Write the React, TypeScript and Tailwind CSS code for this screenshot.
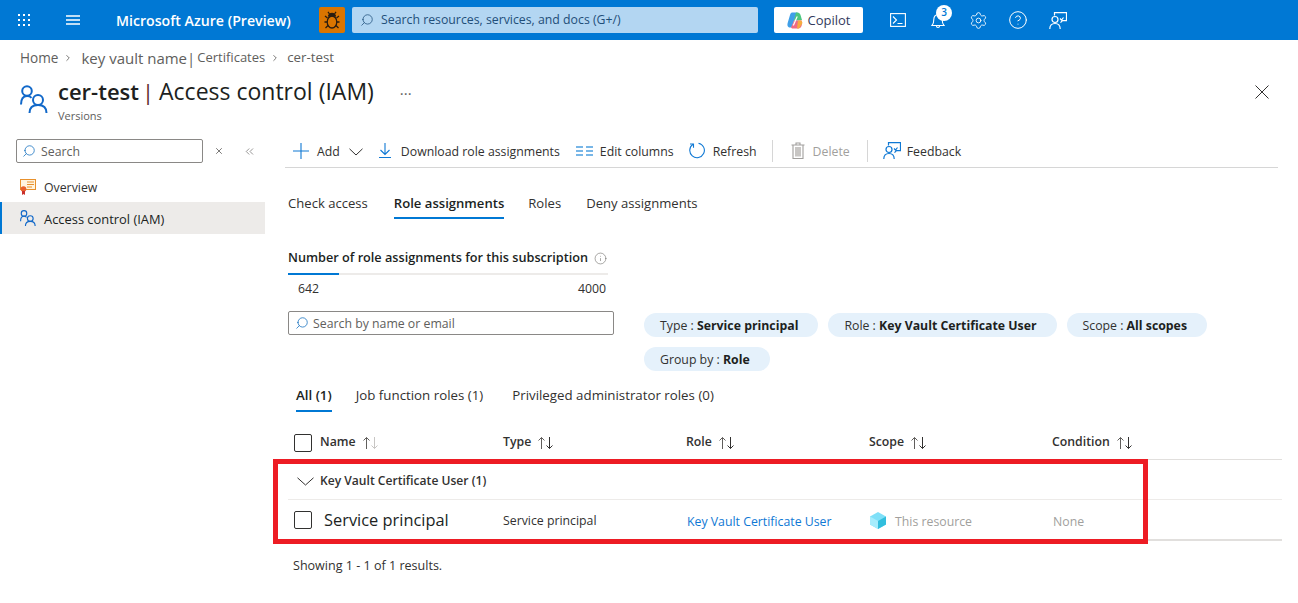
import { ChevronRight, ChevronsLeft, CircleHelp, Info, Search, Settings, X } from 'lucide-react'

const waffle = [3, 8, 13]

function Waffle() {
    return (
        <svg width="16" height="16" viewBox="0 0 16 16" fill="#fff">
            {waffle.map((y) => waffle.map((x) => <rect key={`${x}-${y}`} x={x - 1} y={y - 1} width="2" height="2" />))}
        </svg>
    )
}

function Bug() {
    return (
        <svg width="16" height="18" viewBox="0 0 16 18" fill="none" stroke="#2b1d10" strokeWidth="1.300">
            <ellipse cx="8" cy="11" rx="4.800" ry="6" />
            <path d="M4.500 5.500C5 3 6 2.500 8 2.500s3 .5 3.500 3" fill="#2b1d10" />
            <path d="M5.500 3L4 .8M10.500 3L12 .8M1 5l2.500 2M15 5l-2.500 2M.5 11h2.700M15.500 11h-2.700M1.500 17l2.500-2.500M14.500 17L12 14.500" />
        </svg>
    )
}

function CopilotLogo() {
    return (
        <svg width="16" height="17" viewBox="0 0 16 17">
            <path d="M5 .5h5.500L7 9l-2.500 6.500H3C.5 15.500 0 13 .8 10.500L3 3C3.500 1.500 4 .5 5 .5z" fill="#3f9fe8" />
            <path d="M9 .5h1.500c1.500 0 2.500 1 3 2.500l1.500 5-4 .5H7z" fill="#4dc67f" />
            <path d="M4 15.500L7 8.500h7.500c1 3 .5 8-3.500 8H5z" fill="#ee6a86" />
            <path d="M11 8.500h3.500l1 2.500-3.500 5.500h-2z" fill="#f6ab3f" />
            <path d="M9.500 4.500l1.300 0-3.800 9-1.300 0z" fill="#fff" />
        </svg>
    )
}

function People({ size = 28 }: { size?: number }) {
    return (
        <svg width={size} height={size} viewBox="0 0 28 28" fill="none" stroke="#1168c9" strokeWidth="2">
            <circle cx="7" cy="6" r="4.800" />
            <path d="M1 19.500c0-5 2-8.500 6-8.500 2 0 3.500.6 4.500 1.800" />
            <circle cx="18" cy="15" r="5" />
            <path d="M9.500 28c0-5 3-8 8.500-8s8.500 3 8.500 8" />
        </svg>
    )
}

function Feedback({ color }: { color: string }) {
    return (
        <svg width="18" height="17" viewBox="0 0 18 17" fill="none" stroke={color} strokeWidth="1.200">
            <path d="M5.500 3.500V.6h12v8h-4l-2 2" />
            <circle cx="6" cy="7.500" r="3" />
            <path d="M.8 17c0-3.500 2-5.500 5.200-5.500s5.200 2 5.200 5.500" />
            <path d="M11 6.500l1.500 1.500 2-2.500" />
        </svg>
    )
}

function Chevron() {
    return (
        <svg width="14" height="8" viewBox="0 0 14 8" fill="none" stroke="#323130" strokeWidth="1">
            <path d="M.5 .8L7 7l6.500-6.200" />
        </svg>
    )
}

function SortArrows({ muted = false }: { muted?: boolean }) {
    return (
        <svg width="18" height="14" viewBox="0 0 18 14" fill="none" strokeWidth="1">
            <path d="M4.500 13V1.500M1.500 4.500l3-3 3 3" stroke="#605e5c" />
            <path d="M12.500 1v11.500M9.500 9.500l3 3 3-3" stroke={muted ? '#c8c6c4' : '#323130'} />
        </svg>
    )
}

function Checkbox() {
    return <span className="block w-[18px] h-[18px] shrink-0 rounded-[2px] border border-[#323130]" />
}

function Pill({ label, value }: { label: string; value: string }) {
    return (
        <span className="inline-flex items-center h-6 pt-[2px] pl-4 pr-5 rounded-full bg-[#e5f1fb] text-[12.300px] text-[#323130]">
            {label}&nbsp;:&nbsp;<b className="font-bold text-[#201f1e]">{value}</b>
        </span>
    )
}

const columns = ['Type', 'Role', 'Scope', 'Condition']

export default function App() {
    return (
        <div className="h-[603px] w-[1298px] overflow-hidden bg-white text-[12.300px] text-[#323130] font-['Open_Sans',sans-serif]">
            <header className="flex items-center h-10 bg-[#0078d4] text-white">
                <div className="flex w-[116px] items-center pl-[16px] gap-[33px]">
                    <Waffle />
                    <svg width="16" height="12" viewBox="0 0 16 12" stroke="#fff" strokeWidth="1.300">
                        <path d="M1 2h14M1 6h14M1 10h14" />
                    </svg>
                </div>
                <span className="w-[203px] pt-px text-[14.150px] font-semibold whitespace-nowrap">Microsoft Azure (Preview)</span>
                <span className="flex items-center justify-center w-[26px] h-[26px] rounded-[2px] bg-[#db7500]">
                    <Bug />
                </span>
                <div className="flex items-center ml-[7px] w-[406px] h-[26px] rounded-[2px] bg-[#b3d6f2] pl-[8px] gap-[7px] text-[#1f4e79]">
                    <Search size={14} strokeWidth={1.300} className="-scale-x-100" />
                    <span className="pt-px">Search resources, services, and docs (G+/)</span>
                </div>
                <div className="flex items-center justify-center ml-4 w-[89px] h-[26px] rounded-[2px] bg-white gap-[5px] text-[13px] font-medium text-[#323a5c]">
                    <CopilotLogo />
                    <span className="pt-px">Copilot</span>
                </div>
                <div className="flex items-center ml-[25px] gap-[20px]">
                    <span className="flex justify-center w-5">
                        <svg width="16" height="14" viewBox="0 0 16 14" fill="none" stroke="#fff" strokeWidth="1.100">
                            <rect x=".6" y=".6" width="14.800" height="12.800" />
                            <path d="M3 3.500l3.500 3.500-3.500 3.500M7.500 10.500h5" />
                        </svg>
                    </span>
                    <span className="relative flex justify-center w-5">
                        <svg width="14" height="17" viewBox="0 0 14 17" fill="none" stroke="#fff" strokeWidth="1.100">
                            <path d="M1 13.500h12c-1.500-1.500-1.800-3-1.800-6 0-3-1.700-5-4.200-5S2.800 4.500 2.800 7.500c0 3-.3 4.500-1.800 6zM5.500 14c0 2 3 2 3 0" />
                        </svg>
                        <span className="absolute -top-[7px] left-[8px] flex items-center justify-center w-[16px] h-[16px] rounded-full bg-white text-[10px] font-semibold text-[#0078d4]">3</span>
                    </span>
                    <span className="flex justify-center w-5">
                        <Settings size={19} strokeWidth={1.100} />
                    </span>
                    <span className="flex justify-center w-5">
                        <CircleHelp size={20} strokeWidth={1.200} />
                    </span>
                    <span className="flex justify-center w-5">
                        <Feedback color="#fff" />
                    </span>
                </div>
            </header>

            <nav className="flex items-center h-9 pl-5 text-[#605e5c]">
                <span className="text-[13.600px]">Home</span>
                <ChevronRight size={10} className="ml-[5px] mr-[8px]" />
                <span className="text-[15px] whitespace-nowrap">key vault name|</span>
                <span className="ml-[2px] text-[13px]">Certificates</span>
                <ChevronRight size={10} className="ml-[5px] mr-[7px]" />
                <span className="text-[13.300px]">cer-test</span>
            </nav>

            <div className="flex h-[54px] pl-5 pr-[29px]">
                <div className="mt-[9px] w-[38px]">
                    <People />
                </div>
                <div>
                    <h1 className="flex h-[32px] text-[22px] leading-[31px] whitespace-nowrap text-[#201f1e]">
                        <b className="font-semibold">cer-test</b>
                        <span className="ml-[3px] text-[#5c2b2b]">|</span>
                        <span className="ml-[5px] text-[23px]">Access control (IAM)</span>
                    </h1>
                    <p className="text-[11px] leading-[16px] text-[#605e5c]">Versions</p>
                </div>
                <span className="ml-[26px] mt-[3px] text-[#605e5c] text-[15px] leading-[28px]">···</span>
                <svg width="14" height="14" viewBox="0 0 14 14" stroke="#323130" strokeWidth="1" className="ml-auto mt-[9px]">
                    <path d="M.5 .5l13 13M13.500 .5l-13 13" />
                </svg>
            </div>

            <div className="flex">
                <aside className="w-[265px] shrink-0">
                    <div className="flex items-center h-[24px] mt-[9px] pl-4">
                        <div className="flex items-center w-[187px] h-[24px] rounded-[2px] border border-[#8a8886] pl-[5px] gap-[5px] text-[#605e5c]">
                            <Search size={14} strokeWidth={1.300} className="-scale-x-100 text-[#0f6cbd]" />
                            <span className="pt-[3px]">Search</span>
                        </div>
                        <X size={10} className="ml-[11px] text-[#605e5c]" />
                        <ChevronsLeft size={13} strokeWidth={1.200} className="ml-[19px] text-[#605e5c]" />
                    </div>
                    <div className="flex items-center h-[32px] mt-[8px] pl-5 gap-[8px]">
                        <svg width="16" height="16" viewBox="0 0 16 16" fill="none">
                            <rect x=".5" y=".5" width="15" height="10" fill="#fff4e0" stroke="#e8912d" />
                            <path d="M7 3h7M7 5.500h7M7 8h5" stroke="#e8912d" />
                            <circle cx="3.500" cy="10" r="2.800" fill="#e8602d" />
                            <path d="M2 12v4l1.500-1 1.500 1v-4" fill="#c9302d" />
                        </svg>
                        <span className="pt-[2px]">Overview</span>
                    </div>
                    <div className="flex items-center h-[32px] pl-5 gap-[8px] bg-[#edebe9] border-l-2 border-[#0078d4] -mt-[1px]">
                        <span className="-ml-[2px]">
                            <People size={16} />
                        </span>
                        <span className="pt-[4px] text-[12.900px] text-[#201f1e]">Access control (IAM)</span>
                    </div>
                </aside>

                <main className="flex-1 min-w-0 pl-[23px] pr-[16px]">
                    <div className="flex items-center h-[38px] pt-[4px] -ml-[3px] mr-[4px] border-b border-[#d6d6d6] pl-[8px]">
                        <svg width="16" height="16" viewBox="0 0 16 16" stroke="#0f78d4" strokeWidth="1.100">
                            <path d="M8 0v16M0 8h16" />
                        </svg>
                        <span className="ml-[8px] pt-[4px]">Add</span>
                        <span className="ml-[9px] pt-[2px]">
                            <Chevron />
                        </span>
                        <svg width="14" height="17" viewBox="0 0 14 17" fill="none" stroke="#0f78d4" strokeWidth="1.100" className="ml-[15px]">
                            <path d="M7 1v11M2.500 8l4.500 4.500L11.500 8M1 15.500h12" />
                        </svg>
                        <span className="ml-[9px] pt-[4px]">Download role assignments</span>
                        <svg width="17" height="12" viewBox="0 0 17 12" stroke="#4c9fe0" strokeWidth="1.300" className="ml-[16px]">
                            <path d="M0 2h7M10 2h7M0 6h7M10 6h7M0 10h7M10 10h7" />
                        </svg>
                        <span className="ml-[7px] pt-[4px]">Edit columns</span>
                        <svg width="17" height="17" viewBox="0 0 17 17" fill="none" stroke="#0f78d4" strokeWidth="1.100" className="ml-[15px]">
                            <path d="M9.500 1.200a7.300 7.300 0 1 1-5.500 1.100" />
                            <path d="M1 2h3.500v3.700" />
                        </svg>
                        <span className="ml-[7px] pt-[4px]">Refresh</span>
                        <span className="ml-[15px] w-px h-[22px] bg-[#d6d6d6]" />
                        <svg width="14" height="17" viewBox="0 0 14 17" fill="none" stroke="#a19f9d" strokeWidth="1.100" className="ml-[18px]">
                            <path d="M.5 3h13M5 3V1h4v2M2 3v13.500h10V3" />
                            <rect x="4" y="5" width="6" height="9.500" fill="#c8c6c4" stroke="none" />
                        </svg>
                        <span className="ml-[8px] pt-[4px] text-[#a19f9d]">Delete</span>
                        <span className="ml-[17px] w-px h-[22px] bg-[#d6d6d6]" />
                        <span className="ml-[15px]">
                            <Feedback color="#0f78d4" />
                        </span>
                        <span className="ml-[6px] pt-[4px]">Feedback</span>
                    </div>

                    <div className="flex h-[36px] mt-[18px] text-[13.100px]">
                        <span className="h-[33px] leading-[35px]">Check access</span>
                        <span className="ml-[26px] h-[33px] leading-[35px] font-semibold border-b-2 border-[#0078d4] text-[#201f1e]">Role assignments</span>
                        <span className="ml-[24px] h-[33px] leading-[35px]">Roles</span>
                        <span className="ml-[25px] h-[33px] leading-[35px]">Deny assignments</span>
                    </div>

                    <div className="w-[320px] mt-[27px]">
                        <div className="flex items-center h-[18px]">
                            <span className="font-semibold text-[12.680px] text-[#201f1e] whitespace-nowrap">Number of role assignments for this subscription</span>
                            <Info size={13} strokeWidth={1} className="ml-auto mr-px text-[#605e5c]" />
                        </div>
                        <div className="h-[2px] mt-[6px] bg-[#edebe9]">
                            <div className="h-[2px] w-[51px] bg-[#0078d4]" />
                        </div>
                        <div className="flex justify-between h-[18px] mt-[5px] pl-[10px] pr-[2px]">
                            <span>642</span>
                            <span>4000</span>
                        </div>
                    </div>

                    <div className="flex items-start mt-[13px]">
                        <div className="flex items-center shrink-0 w-[326px] h-[24px] rounded-[2px] border border-[#8a8886] pl-[6px] gap-[4px] text-[#605e5c]">
                            <Search size={14} strokeWidth={1.300} className="-scale-x-100 text-[#0f6cbd]" />
                            <span className="pt-[2px]">Search by name or email</span>
                        </div>
                        <div className="flex flex-wrap gap-[10px] ml-[30px] mt-[2px]">
                            <Pill label="Type" value="Service principal" />
                            <Pill label="Role" value="Key Vault Certificate User" />
                            <Pill label="Scope" value="All scopes" />
                            <Pill label="Group by" value="Role" />
                        </div>
                    </div>

                    <div className="flex h-[27px] mt-[15px] pl-[8px] text-[13.300px]">
                        <span className="h-[26px] leading-[18px] font-semibold border-b-2 border-[#0078d4] text-[#201f1e]">All (1)</span>
                        <span className="ml-[24px] leading-[18px]">Job function roles (1)</span>
                        <span className="ml-[29px] leading-[18px]">Privileged administrator roles (0)</span>
                    </div>

                    <div className="relative w-[994px] mt-[9px]">
                        <div className="grid grid-cols-[215px_183px_183px_183px_1fr] items-center h-[38px] pt-[4px] border-b border-[#e1dfdd]">
                            <div className="flex items-center pl-[6px] gap-[8px] font-semibold">
                                <Checkbox />
                                Name
                                <span className="-ml-[2px]">
                                    <SortArrows muted />
                                </span>
                            </div>
                            {columns.map((c) => (
                                <div key={c} className="flex items-center gap-[6px] font-semibold">
                                    {c}
                                    <SortArrows />
                                </div>
                            ))}
                        </div>
                        <div className="flex items-center h-[40px] pt-[4px] pl-[9px] border-b border-[#edebe9]">
                            <svg width="17" height="9" viewBox="0 0 17 9" fill="none" stroke="#323130" strokeWidth="1">
                                <path d="M.5 .8L8.500 8l8-7.200" />
                            </svg>
                            <span className="ml-[6px] font-semibold text-[12.100px]">Key Vault Certificate User (1)</span>
                        </div>
                        <div className="grid grid-cols-[215px_183px_183px_183px_1fr] items-center h-[41px] pt-[2px] border-b-2 border-[#e1dfdd]">
                            <div className="flex items-center pl-[6px] gap-[12px] text-[16.400px] text-[#201f1e]">
                                <Checkbox />
                                Service principal
                            </div>
                            <span className="pt-[2px]">Service principal</span>
                            <span className="ml-px pt-[4px] text-[#0f78d4]">Key Vault Certificate User</span>
                            <div className="flex items-center gap-[9px] ml-px pt-[2px] text-[#a19f9d]">
                                <svg width="16" height="17" viewBox="0 0 16 17" className="-mt-[2px]">
                                    <path d="M8 0l8 4.500v8L8 17l-8-4.500v-8z" fill="#7fe0f8" />
                                    <path d="M0 4.500L8 9v8l-8-4.500z" fill="#a6ecfc" />
                                    <path d="M16 4.500L8 9v8l8-4.500z" fill="#32bedd" />
                                </svg>
                                <span className="pt-[2px]">This resource</span>
                            </div>
                            <span className="ml-px pt-[4px] text-[#a19f9d]">None</span>
                        </div>
                        {/* red highlight drawn over the group rows */}
                        <div className="absolute left-[-15px] top-[37px] w-[875px] h-[85px] border-[5px] border-[#ed1c24]" />
                    </div>

                    <p className="mt-[16px] pl-[5px] text-[12.550px]">Showing 1 - 1 of 1 results.</p>
                </main>
            </div>
        </div>
    )
}
